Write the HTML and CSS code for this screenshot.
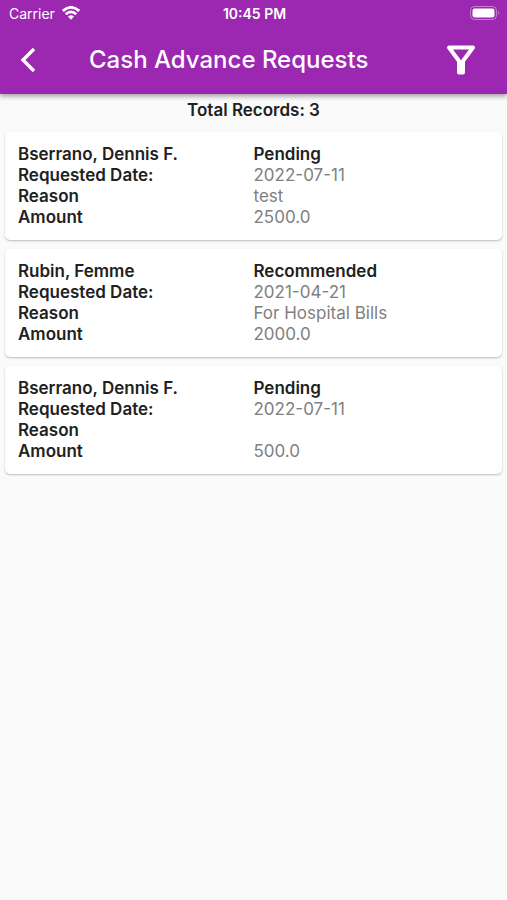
FILE: index.html
```html
<!DOCTYPE html>
<html lang="en">
<head>
  <meta charset="UTF-8" />
  <meta name="viewport" content="width=device-width, initial-scale=1.0" />
  <title>Cash Advance Requests</title>
  <link rel="stylesheet" href="styles.css">
</head>
<body>
  <header class="app-header">
    <div class="status-bar">
      <div class="carrier">
        <span>Carrier</span>
        <svg class="wifi" viewBox="0 0 18 14" aria-hidden="true">
          <path d="M0.8 5 Q9 -2.2 17.2 5" />
          <path d="M3.7 8.2 Q9 3.6 14.3 8.2" />
          <path class="wifi-dot" d="M6 10.6 Q9 8 12 10.6 L9 13.8 Z" />
        </svg>
      </div>
      <span class="time">10:45 PM</span>
      <svg class="battery" viewBox="0 0 30 14" aria-hidden="true">
        <rect class="battery-shell" x="0.5" y="0.5" width="26" height="13" rx="4" />
        <rect class="battery-fill" x="2.5" y="2.5" width="22" height="9" rx="2.2" />
        <path class="battery-shell-tip" d="M28 4.8 Q30 7 28 9.2 Z" />
      </svg>
    </div>
    <div class="toolbar">
      <button class="icon-button" type="button" aria-label="Back">
        <svg class="back-icon" viewBox="0 0 16 26" aria-hidden="true">
          <path d="M14 2 L3 13 L14 24" />
        </svg>
      </button>
      <h1>Cash Advance Requests</h1>
      <button class="icon-button" type="button" aria-label="Filter">
        <svg class="filter-icon" viewBox="0 0 30 30" aria-hidden="true">
          <path d="M3 2.5 H27 L17 16 V27.5 H13 V16 Z" />
          <path d="M15 16 V27.5" />
        </svg>
      </button>
    </div>
  </header>

  <main>
    <p class="total">Total Records: 3</p>

    <article class="card">
      <div class="label">Bserrano, Dennis F.</div>
      <div class="status">Pending</div>
      <div class="label">Requested Date:</div>
      <div class="value">2022-07-11</div>
      <div class="label">Reason</div>
      <div class="value">test</div>
      <div class="label">Amount</div>
      <div class="value">2500.0</div>
    </article>

    <article class="card">
      <div class="label">Rubin, Femme</div>
      <div class="status">Recommended</div>
      <div class="label">Requested Date:</div>
      <div class="value">2021-04-21</div>
      <div class="label">Reason</div>
      <div class="value">For Hospital Bills</div>
      <div class="label">Amount</div>
      <div class="value">2000.0</div>
    </article>

    <article class="card">
      <div class="label">Bserrano, Dennis F.</div>
      <div class="status">Pending</div>
      <div class="label">Requested Date:</div>
      <div class="value">2022-07-11</div>
      <div class="label">Reason</div>
      <div class="value"></div>
      <div class="label">Amount</div>
      <div class="value">500.0</div>
    </article>
  </main>
</body>
</html>
```
FILE: styles.css
```css
* {
  box-sizing: border-box;
}

body {
  margin: 0;
  background-color: #fafafa;
  color: #212121;
  font-family: Inter, sans-serif;
  font-size: 17px;
  line-height: 21px;
}

.app-header {
  background-color: #9c27b0;
  color: #ffffff;
  box-shadow: 0 2px 5px rgba(0, 0, 0, 0.4);
}

.status-bar {
  display: grid;
  grid-template-columns: 1fr auto 1fr;
  align-items: center;
  height: 26px;
  padding: 0 7px 0 9px;
  font-size: 14px;
}

.carrier {
  display: flex;
  align-items: center;
  gap: 7px;
}

.wifi {
  width: 18px;
  height: 14px;
  fill: none;
  stroke: #ffffff;
  stroke-width: 2.8;
}

.wifi-dot {
  fill: #ffffff;
  stroke: none;
}

.time {
  font-weight: 600;
}

.battery {
  justify-self: end;
  width: 30px;
  height: 14px;
}

.battery-shell {
  fill: none;
  stroke: rgba(255, 255, 255, 0.4);
}

.battery-shell-tip {
  fill: rgba(255, 255, 255, 0.4);
}

.battery-fill {
  fill: #ffffff;
}

.toolbar {
  display: flex;
  align-items: center;
  height: 68px;
  padding: 0 20px 0 2px;
}

.icon-button {
  display: flex;
  align-items: center;
  justify-content: center;
  width: 52px;
  height: 52px;
  padding: 0;
  background: none;
  border: none;
  cursor: pointer;
}

.back-icon {
  width: 16px;
  height: 26px;
}

.filter-icon {
  width: 30px;
  height: 30px;
}

.back-icon path,
.filter-icon path {
  fill: none;
  stroke: #ffffff;
  stroke-width: 4;
  stroke-linejoin: round;
}

.back-icon path {
  stroke-width: 3.4;
  stroke-linejoin: miter;
}

h1 {
  flex: 1;
  margin: 0;
  padding-left: 35px;
  font-size: 24px;
  font-weight: 500;
  line-height: 32px;
}

.total {
  margin: 6px 0 11px;
  font-weight: 600;
  text-align: center;
}

.card {
  display: grid;
  grid-template-columns: 1fr 1fr;
  grid-auto-rows: minmax(21px, auto);
  margin: 0 5px 9px;
  padding: 12px 13px;
  background-color: #ffffff;
  border-radius: 5px;
  box-shadow: 0 1px 2px rgba(0, 0, 0, 0.25);
}

.label,
.status {
  font-weight: 600;
}

.value {
  color: #808080;
}
```
